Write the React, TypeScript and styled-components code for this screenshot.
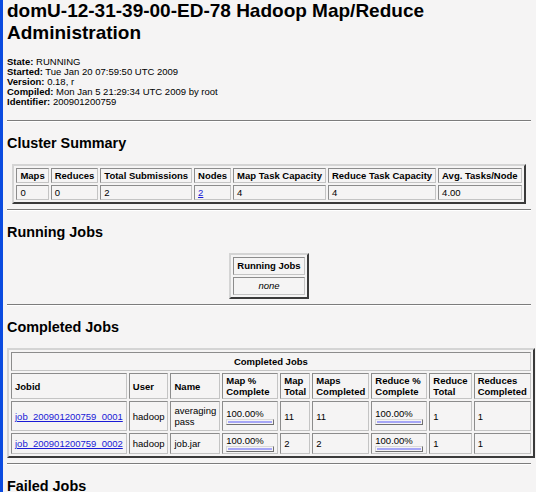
import React from 'react';
import styled, { createGlobalStyle } from 'styled-components';

const GlobalStyle = createGlobalStyle`
  html, body {
    margin: 0;
    padding: 0;
    background: #f5f4f4;
  }
  body {
    font-family: "Liberation Sans", Arial, sans-serif;
    color: #000;
    overflow: hidden;
  }
`;

const Window = styled.div`
  min-height: 492px;
  border-left: 3px solid #0b4be0;
  padding: 0 5px 0 4px;
  overflow: hidden;
`;

const Title = styled.h1`
  font-size: 19px;
  line-height: 22px;
  font-weight: bold;
  margin: 0 0 13px;
`;

const Info = styled.div`
  font-size: 9.5px;
  line-height: 10px;

  b {
    font-weight: bold;
  }
`;

const Rule = styled.hr<{ $gap: number }>`
  height: 0;
  margin: ${(p) => p.$gap}px 0 0;
  border: 0;
  border-top: 1px solid #7c7c7c;
  border-bottom: 1px solid #ffffff;
`;

const Heading = styled.h2`
  font-size: 14.4px;
  line-height: 16px;
  font-weight: bold;
  margin: 13px 0 13px;
`;

const Table = styled.table<{ $full?: boolean; $lh: number }>`
  border-collapse: separate;
  border-spacing: 2px;
  border: 2px solid;
  border-color: #d4d4d4 #3a3a3a #3a3a3a #d4d4d4;
  margin: 0 auto;
  width: ${(p) => (p.$full ? '100%' : 'auto')};
  font-size: 9.5px;
  line-height: ${(p) => p.$lh}px;
`;

const Cell = styled.td<{ $pad: string; $center?: boolean; $w?: number }>`
  padding: ${(p) => p.$pad};
  border: 1px solid;
  border-color: #8c8c8c #c4c4c4 #c4c4c4 #8c8c8c;
  text-align: ${(p) => (p.$center ? 'center' : 'left')};
  vertical-align: middle;
  width: ${(p) => (p.$w ? `${p.$w}px` : 'auto')};
  white-space: normal;
`;

const HeadCell = styled(Cell).attrs({ as: 'th' })`
  font-weight: bold;
`;

const Link = styled.a`
  color: #1a1ad6;
  text-decoration: underline;
`;

const Bar = styled.div`
  width: 48px;
  height: 6px;
  box-sizing: border-box;
  padding: 1px;
  border: 1px solid;
  border-color: #d8d8d8 #707070 #707070 #d8d8d8;
`;

const Fill = styled.div`
  height: 2px;
  background: #a6a6f6;
`;

type Job = {
  id: string;
  user: string;
  name: string;
  mapPct: number;
  mapTotal: number;
  mapsDone: number;
  redPct: number;
  redTotal: number;
  redsDone: number;
};

const jobs: Job[] = [
  { id: 'job_200901200759_0001', user: 'hadoop', name: 'averaging pass', mapPct: 100, mapTotal: 11, mapsDone: 11, redPct: 100, redTotal: 1, redsDone: 1 },
  { id: 'job_200901200759_0002', user: 'hadoop', name: 'job.jar', mapPct: 100, mapTotal: 2, mapsDone: 2, redPct: 100, redTotal: 1, redsDone: 1 },
];

const summaryHeads = ['Maps', 'Reduces', 'Total Submissions', 'Nodes', 'Map Task Capacity', 'Reduce Task Capacity', 'Avg. Tasks/Node'];

const jobHeads: [string, number][] = [
  ['Jobid', 109],
  ['User', 30],
  ['Name', 41],
  ['Map % Complete', 44],
  ['Map Total', 22],
  ['Maps Completed', 49],
  ['Reduce % Complete', 49],
  ['Reduce Total', 34],
  ['Reduces Completed', 48],
];

const Progress: React.FC<{ pct: number }> = ({ pct }) => (
  <>
    {pct.toFixed(2)}%
    <Bar>
      <Fill style={{ width: `${pct}%` }} />
    </Bar>
  </>
);

const App: React.FC = () => {
  const pad = '3px 3px';
  const thin = '1px 3px';
  return (
    <Window>
      <GlobalStyle />
      <Title>domU-12-31-39-00-ED-78 Hadoop Map/Reduce Administration</Title>

      <Info>
        <b>State:</b> RUNNING<br />
        <b>Started:</b> Tue Jan 20 07:59:50 UTC 2009<br />
        <b>Version:</b> 0.18, r<br />
        <b>Compiled:</b> Mon Jan 5 21:29:34 UTC 2009 by root<br />
        <b>Identifier:</b> 200901200759<br />
      </Info>

      <Rule $gap={13} />
      <Heading>Cluster Summary</Heading>
      <Table $lh={11}>
        <tbody>
          <tr>
            {summaryHeads.map((h) => (
              <HeadCell key={h} $pad={thin}>{h}</HeadCell>
            ))}
          </tr>
          <tr>
            <Cell $pad={thin}>0</Cell>
            <Cell $pad={thin}>0</Cell>
            <Cell $pad={thin}>2</Cell>
            <Cell $pad={thin}><Link href="#">2</Link></Cell>
            <Cell $pad={thin}>4</Cell>
            <Cell $pad={thin}>4</Cell>
            <Cell $pad={thin}>4.00</Cell>
          </tr>
        </tbody>
      </Table>

      <Rule $gap={5} />
      <Heading>Running Jobs</Heading>
      <Table $lh={10}>
        <tbody>
          <tr>
            <HeadCell $pad={pad} $center>Running Jobs</HeadCell>
          </tr>
          <tr>
            <Cell $pad={pad} $center><i>none</i></Cell>
          </tr>
        </tbody>
      </Table>

      <Rule $gap={5} />
      <Heading>Completed Jobs</Heading>
      <Table $full $lh={11}>
        <tbody>
          <tr>
            <Cell $pad={pad} $center colSpan={9}><b>Completed Jobs</b></Cell>
          </tr>
          <tr>
            {jobHeads.map(([h, w]) => (
              <Cell key={h} $pad={thin} $w={w}><b>{h}</b></Cell>
            ))}
          </tr>
          {jobs.map((j) => (
            <tr key={j.id}>
              <Cell $pad={pad}><Link href="#">{j.id}</Link></Cell>
              <Cell $pad={pad}>{j.user}</Cell>
              <Cell $pad={pad}>{j.name}</Cell>
              <Cell $pad={thin}><Progress pct={j.mapPct} /></Cell>
              <Cell $pad={pad}>{j.mapTotal}</Cell>
              <Cell $pad={pad}>{j.mapsDone}</Cell>
              <Cell $pad={thin}><Progress pct={j.redPct} /></Cell>
              <Cell $pad={pad}>{j.redTotal}</Cell>
              <Cell $pad={pad}>{j.redsDone}</Cell>
            </tr>
          ))}
        </tbody>
      </Table>

      <Rule $gap={5} />
      <Heading>Failed Jobs</Heading>
    </Window>
  );
};

export default App;
